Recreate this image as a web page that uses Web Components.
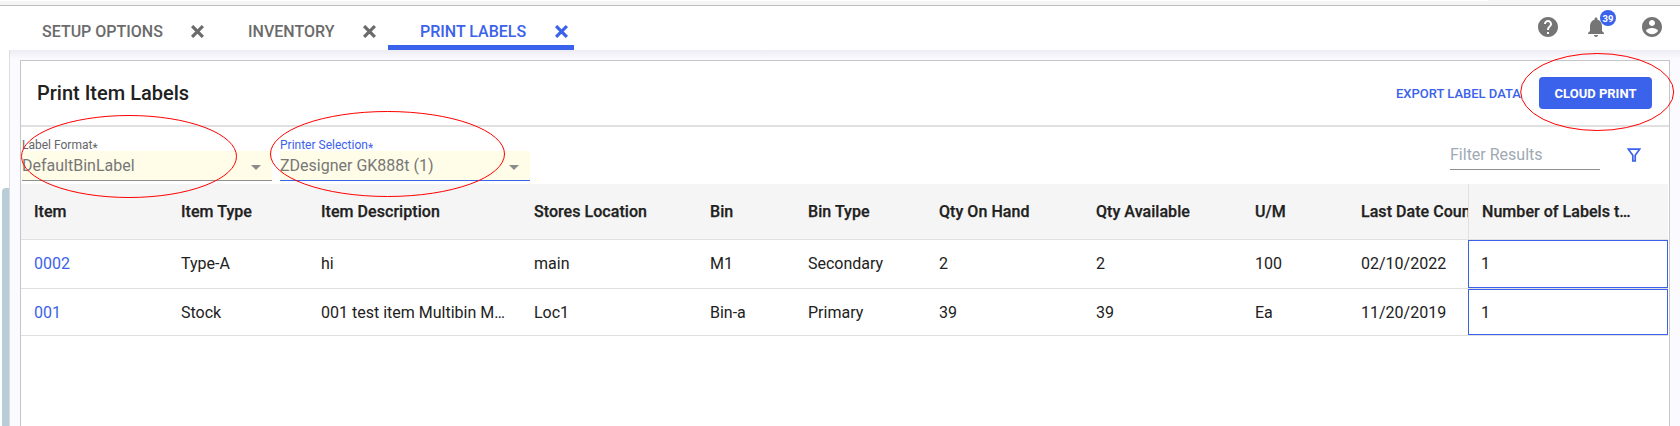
<!DOCTYPE html>
<html lang="en">
<head>
<meta charset="utf-8">
<title>Print Item Labels</title>
<style>
body{margin:0;width:1680px;height:426px;overflow:hidden;background:#fff;font-family:Roboto,"Liberation Sans",sans-serif;color:#212121;--blue:#3b62ea;--line:#e0e0e0}
</style>
</head>
<body>
<label-app></label-app>
<script>
const define = (name, html, setup) => {
  const t = document.createElement('template');
  t.innerHTML = html;
  customElements.define(name, class extends HTMLElement {
    constructor() {
      super();
      this.attachShadow({mode: 'open'}).append(t.content.cloneNode(true));
    }
    connectedCallback() { if (setup) setup(this, this.shadowRoot); }
  });
};

define('app-tab', `
<style>
:host{display:flex;box-sizing:border-box;height:44px;padding-left:32px;align-items:center;justify-content:space-between;font-size:16px;font-weight:500;color:#6b6b6b;border-bottom:5px solid transparent;white-space:nowrap}
:host([active]){color:var(--blue);border-color:var(--blue)}
span{line-height:20px;padding-top:12px}
svg{width:13px;height:13px;margin:12px var(--end,12px) 0 0;display:block}
</style>
<span><slot></slot></span>
<svg viewBox="0 0 13 13"><path d="M2.200 2.200L10.800 10.800M10.800 2.200L2.200 10.800" stroke="currentColor" stroke-width="3.200" stroke-linecap="square"/></svg>`);

define('header-icons', `
<style>
:host{display:flex;height:42px;align-items:center}
svg{width:24px;height:24px;fill:#757575;display:block}
.bell{position:relative;margin:0 32px 0 24px}
b{position:absolute;left:16px;top:-5px;width:16px;height:16px;border-radius:50%;background:var(--blue);color:#fff;font:700 9.5px/17px Roboto,sans-serif;text-align:center}
</style>
<svg viewBox="0 0 24 24"><path d="M12 2C6.48 2 2 6.48 2 12s4.48 10 10 10 10-4.480 10-10S17.520 2 12 2zm1 17h-2v-2h2v2zm2.070-7.750l-.9.920C13.450 12.900 13 13.500 13 15h-2v-.5c0-1.100.450-2.100 1.170-2.830l1.240-1.260c.370-.360.590-.860.590-1.410 0-1.100-.9-2-2-2s-2 .9-2 2H8c0-2.210 1.790-4 4-4s4 1.790 4 4c0 .880-.360 1.680-.930 2.250z"/></svg>
<div class="bell"><svg viewBox="0 0 24 24"><path d="M12 22c1.100 0 2-.9 2-2h-4c0 1.100.890 2 2 2zm6-6v-5c0-3.070-1.640-5.640-4.500-6.320V4c0-.830-.670-1.500-1.500-1.500s-1.500.670-1.500 1.500v.680C7.630 5.360 6 7.920 6 11v5l-2 2v1h16v-1l-2-2z"/></svg><b>39</b></div>
<svg viewBox="0 0 24 24"><path d="M12 2C6.480 2 2 6.480 2 12s4.480 10 10 10 10-4.480 10-10S17.520 2 12 2zm0 3c1.660 0 3 1.340 3 3s-1.340 3-3 3-3-1.340-3-3 1.340-3 3-3zm0 14.200c-2.500 0-4.710-1.280-6-3.220.030-1.990 4-3.080 6-3.080 1.990 0 5.970 1.090 6 3.080-1.290 1.940-3.500 3.220-6 3.220z"/></svg>`);

define('select-field', `
<style>
:host{display:block;width:250px}
.label{font-size:12px;line-height:14px;height:13px;color:#666;padding-top:11px}
:host([focused]) .label{color:var(--blue)}
i{font-style:normal;font-size:12px;line-height:0;position:relative;top:3px}
.box{display:flex;align-items:center;justify-content:space-between;box-sizing:border-box;height:30px;padding-right:11px;background:#fffde7;border-bottom:1px solid #8f8f8f;font-size:16px;color:#777}
:host([focused]) .box{border-color:var(--blue)}
svg{width:10px;height:5px;margin-top:4px}
</style>
<div class="label"><slot name="label"></slot><i>*</i></div>
<div class="box"><slot></slot><svg viewBox="0 0 10 5"><path d="M0 0h10L5 5z" fill="#8b8b8b"/></svg></div>`);

define('filter-box', `
<style>
:host{display:flex}
.in{width:150px;height:24px;margin-top:18px;border-bottom:1px solid #8f8f8f;font-size:16px;line-height:20px;color:#9fa9b3}
svg{width:14px;height:14px;margin:21px 28px 0 27px}
</style>
<div class="in">Filter Results</div>
<svg viewBox="0 0 14 14"><path d="M1.300 1.200H12.700L8.200 7.300V13H5.800V7.300z" fill="none" stroke="var(--blue)" stroke-width="1.700"/></svg>`);

define('label-table', `
<style>
:host{display:block;width:1647px}
.row{display:grid;grid-template-columns:147px 140px 213px 176px 98px 131px 157px 159px 106px 120px 200px;border-bottom:1px solid var(--line);font-size:16px}
.row>*{box-sizing:border-box;padding-left:13px;display:block;overflow:hidden;white-space:nowrap;text-overflow:ellipsis}
.head{height:55px;line-height:56px;background:#f5f5f5;font-weight:500;letter-spacing:.05px}
.head>:nth-child(10){text-overflow:clip}
.head>:last-child{border-left:1px solid var(--line);padding-right:34px}
.head>*{-webkit-text-stroke:.25px #212121}
.r1{height:48px;line-height:47px}
.r2{height:46px;line-height:47px}
.r1>:nth-child(3),.r2>:nth-child(3){padding-right:14px}
a{color:var(--blue)}
.row>.edit{border:1px solid var(--blue);line-height:45px;padding-left:12px}
</style>
<div class="row head"></div><div class="row r1"></div><div class="row r2"></div>`,
(host, root) => {
  const data = [
    ['Item','Item Type','Item Description','Stores Location','Bin','Bin Type','Qty On Hand','Qty Available','U/M','Last Date Counted','Number of Labels to Print'],
    ['0002','Type-A','hi','main','M1','Secondary','2','2','100','02/10/2022','1'],
    ['001','Stock','001 test item Multibin Method','Loc1','Bin-a','Primary','39','39','Ea','11/20/2019','1']];
  root.querySelectorAll('.row').forEach((row, r) => data[r].forEach((text, c) => {
    const cell = document.createElement(r && !c ? 'a' : 'span');
    cell.textContent = text;
    if (r && c === 10) cell.className = 'edit';
    row.append(cell);
  }));
});

define('print-card', `
<style>
:host{display:block;box-sizing:border-box;width:1650px;height:366px;background:#fff;border:1px solid #c6c6c9;border-bottom:0;font-size:16px}
header{display:flex;box-sizing:border-box;height:66px;border-bottom:2px solid var(--line);align-items:center;padding:0 17px 0 16px}
h1{font-size:20px;font-weight:500;margin:-1px auto 0 0}
.export{font-size:13px;font-weight:500;color:var(--blue);margin:1px 18px 0 0}
.cloud{width:113px;height:32px;border-radius:4px;background:var(--blue);color:#fff;font-size:13px;font-weight:700;line-height:33px;text-align:center}
.tools{display:flex;height:57px;padding-left:1px}
.tools select-field{margin-right:8px}
filter-box{margin-left:auto}
</style>
<header><h1>Print Item Labels</h1><span class="export">EXPORT LABEL DATA</span><span class="cloud">CLOUD PRINT</span></header>
<div class="tools"><select-field><span slot="label">Label Format</span>DefaultBinLabel</select-field><select-field focused><span slot="label">Printer Selection</span>ZDesigner GK888t (1)</select-field><filter-box></filter-box></div>
<label-table></label-table>`);

define('callout-rings', `
<style>:host{display:block;position:absolute;left:0;top:0;pointer-events:none}svg{display:block}</style>
<svg width="1680" height="426" fill="none" stroke="#f00" stroke-width="1"><ellipse cx="129" cy="156.500" rx="107.500" ry="41"/><ellipse cx="387.500" cy="154" rx="117" ry="42.500"/><ellipse cx="1597.200" cy="92" rx="76.500" ry="38.500"/></svg>`);

define('label-app', `
<style>
:host{display:block;position:relative;height:426px}
.chrome{box-sizing:border-box;height:6px;background:#f5f5f5;border-bottom:1px solid #bdbdbd}
.chrome i{display:block;width:1488px;height:1px;background:#fff;border-radius:0 0 4px 0}
.bar{display:flex;height:44px;padding-left:10px}
.t1{width:206px}.t2{width:172px}.t3{width:186px;--end:6.500px}
header-icons{margin:0 16px 0 auto}
.main{display:flex;height:376px}
.side{width:7px;padding:138px 0 0 2px}
.side i{display:block;height:238px;background:#b9cdd6;border-radius:4px 0 0 0}
.body{flex:1;box-sizing:border-box;border-left:1px solid #dcdce0;padding:10px 0 0 10px;background:linear-gradient(#ececf2,#fafaff 9px)}
</style>
<div class="chrome"><i></i></div>
<div class="bar"><app-tab class="t1">SETUP OPTIONS</app-tab><app-tab class="t2">INVENTORY</app-tab><app-tab class="t3" active>PRINT LABELS</app-tab><header-icons></header-icons></div>
<div class="main"><div class="side"><i></i></div><div class="body"><print-card></print-card></div></div>
<callout-rings></callout-rings>`);
</script>
</body>
</html>
